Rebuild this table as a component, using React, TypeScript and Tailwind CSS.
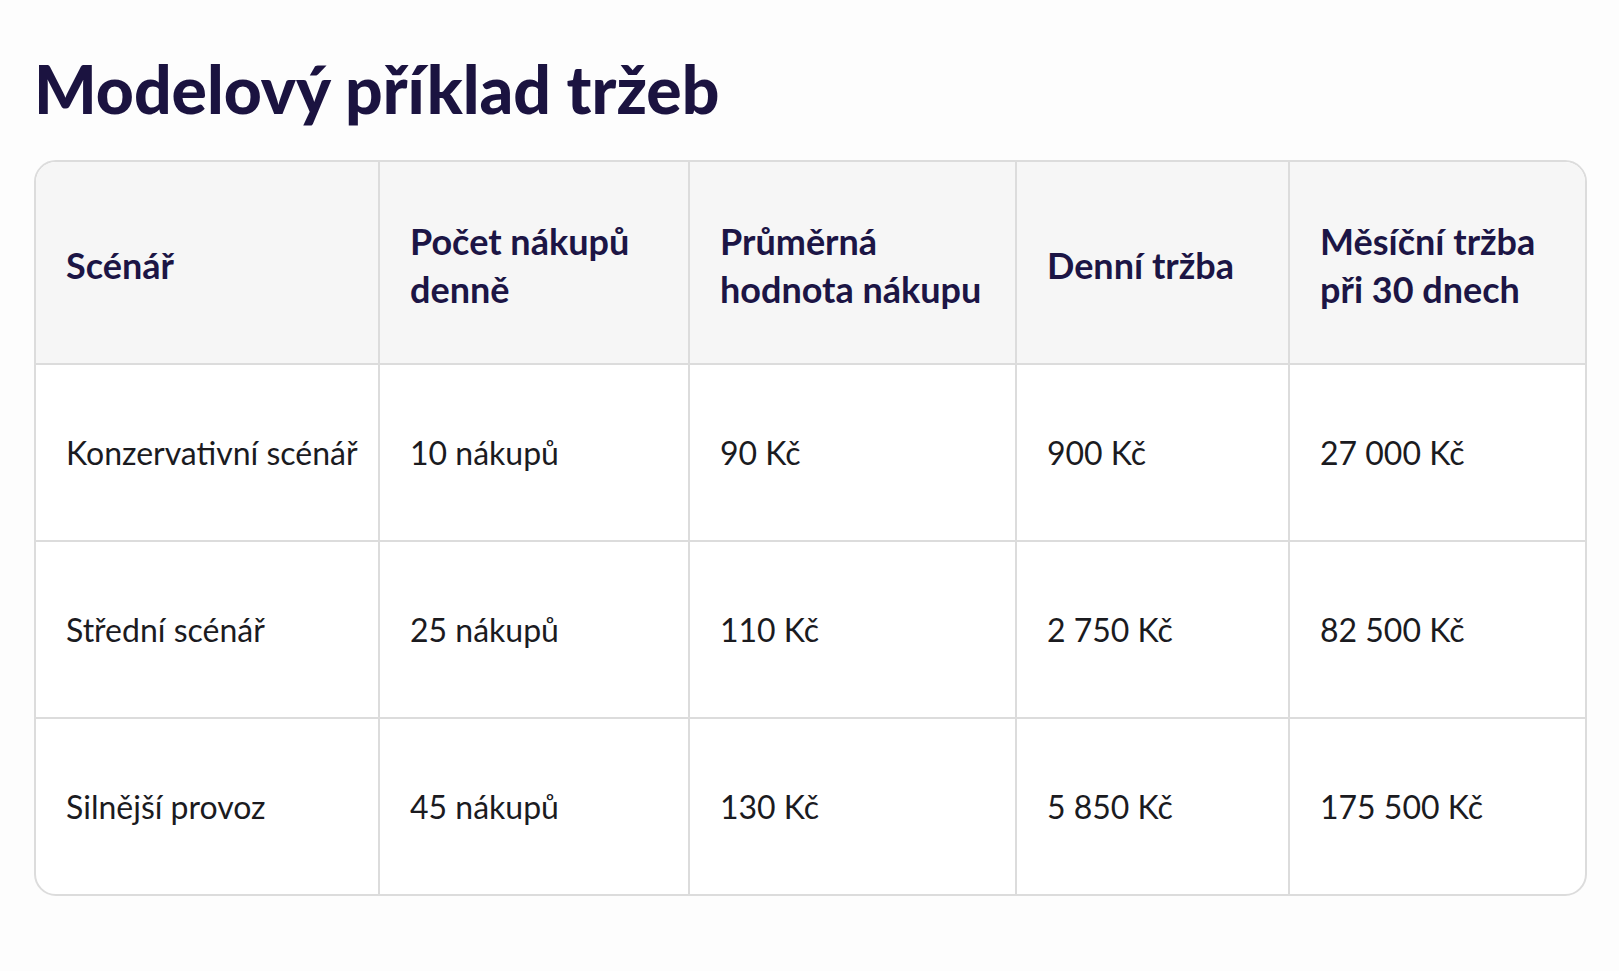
const headers = [
  'Scénář',
  'Počet nákupů denně',
  'Průměrná hodnota nákupu',
  'Denní tržba',
  'Měsíční tržba při 30 dnech',
]

const rows = [
  ['Konzervativní scénář', '10 nákupů', '90 Kč', '900 Kč', '27 000 Kč'],
  ['Střední scénář', '25 nákupů', '110 Kč', '2 750 Kč', '82 500 Kč'],
  ['Silnější provoz', '45 nákupů', '130 Kč', '5 850 Kč', '175 500 Kč'],
]

export default function App() {
  return (
    <div
      className="min-h-screen bg-[#fdfdfd] pt-[49px] pl-[34px] pr-[32px]"
      style={{ fontFamily: 'Lato, "Noto Sans", sans-serif' }}
    >
      <h1 className="text-[66px] leading-[1.2] font-black text-[#1b1340] mb-8">
        Modelový příklad tržeb
      </h1>

      <div className="border-2 border-[#dcdcdc] rounded-[22px] overflow-hidden bg-white">
        <div className="grid grid-cols-[342fr_310fr_327fr_273fr_297fr] grid-rows-[201px_177px_177px_177px]">
          {headers.map((h, i) => (
            <div
              key={h}
              className={`flex items-center bg-[#f6f6f6] pl-[30px] pr-3 pt-1 text-[36px] leading-[48px] font-bold text-[#1c1545] ${
                i > 0 ? 'border-l-2 border-[#dcdcdc]' : ''
              }`}
            >
              <span className={i === 4 ? 'max-w-[230px]' : ''}>{h}</span>
            </div>
          ))}
          {rows.map((row) =>
            row.map((cell, i) => (
              <div
                key={row[0] + i}
                className={`flex items-center border-t-2 border-[#dcdcdc] pl-[30px] pr-2 text-[32px] text-[#1b1b1f] whitespace-nowrap ${
                  i > 0 ? 'border-l-2' : ''
                }`}
              >
                {cell}
              </div>
            ))
          )}
        </div>
      </div>
    </div>
  )
}
